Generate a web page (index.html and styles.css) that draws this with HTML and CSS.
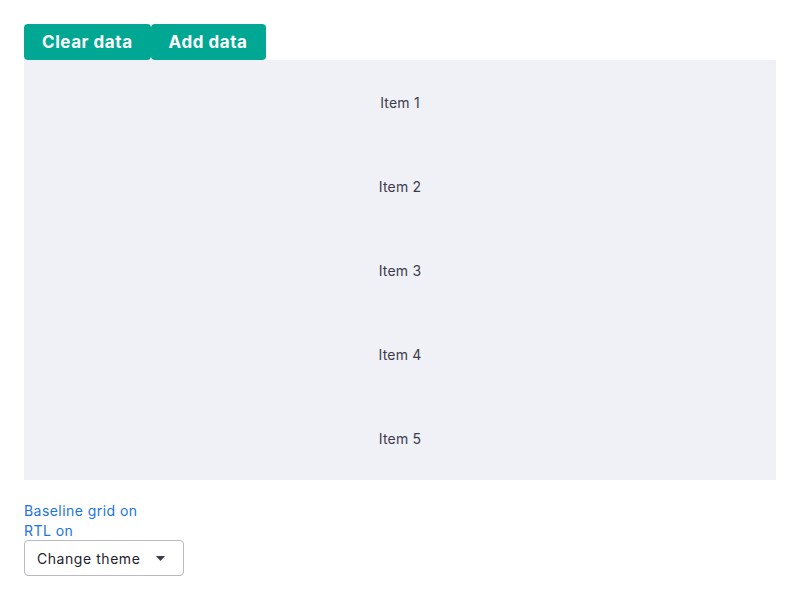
FILE: index.html
```html
<!DOCTYPE html>
<html>
<head>
<meta charset="utf-8">
<link rel="stylesheet" href="styles.css">
</head>
<body>
<div class="page">
  <div class="actions">
    <button class="btn">Clear data</button>
    <button class="btn">Add data</button>
  </div>
  <div class="list">
    <div class="item">Item 1</div>
    <div class="item">Item 2</div>
    <div class="item">Item 3</div>
    <div class="item">Item 4</div>
    <div class="item">Item 5</div>
  </div>
  <div class="controls">
    <a class="toggle">Baseline grid on</a>
    <a class="toggle">RTL on</a>
    <div class="select">
      <span>Change theme</span>
      <svg width="9" height="5" viewBox="0 0 9 5"><path d="M0 0h9L4.5 5z" fill="#3a3a48"/></svg>
    </div>
  </div>
</div>
</body>
</html>
```

FILE: styles.css
```css
html, body { margin: 0; padding: 0; background: #fff; }
body { font-family: Inter, "Noto Sans", sans-serif; }
.page { padding: 24px; }
.actions { display: flex; }
.btn {
  height: 36px;
  padding: 0 18px;
  border: none;
  border-radius: 4px;
  background: #00a793;
  color: #fff;
  font-family: Inter, sans-serif;
  font-weight: 700;
  font-size: 17px;
  letter-spacing: 0.55px;
  cursor: pointer;
}
.list { background: #f0f1f6; display: flex; flex-direction: column; }
.item {
  height: 84px;
  display: flex;
  align-items: center;
  justify-content: center;
  font-size: 14px;
  letter-spacing: 0.2px;
  color: #3c3c4c;
}
.controls { display: flex; flex-direction: column; align-items: flex-start; padding-top: 21px; }
.toggle { color: #1c74e0; font-size: 14px; line-height: 20px; letter-spacing: 0.45px; }
.select {
  margin-top: -1px;
  width: 160px;
  height: 36px;
  box-sizing: border-box;
  border: 1px solid #b8b9c2;
  border-radius: 4px;
  display: flex;
  align-items: center;
  justify-content: space-between;
  padding: 0 18px 0 12px;
  font-size: 14px;
  letter-spacing: 0.55px;
  color: #1d1d2c;
}
```
